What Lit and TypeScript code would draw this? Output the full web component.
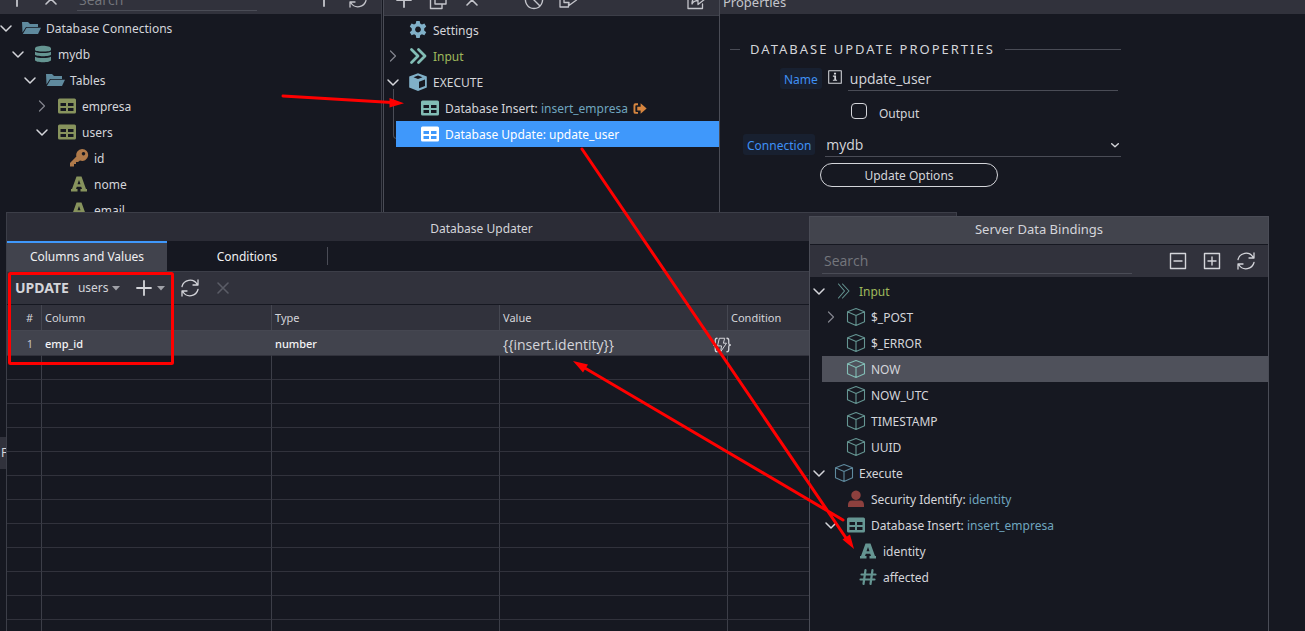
import { LitElement, html, css, svg, nothing } from "lit";
import { customElement, property } from "lit/decorators.js";
import { classMap } from "lit/directives/class-map.js";

const line = (d: string, width = 1.5) => svg`<path d=${d} fill="none" stroke="currentColor" stroke-width=${width} stroke-linecap="round" stroke-linejoin="round"></path>`;
const fill = (d: string) => svg`<path d=${d} fill="currentColor" fill-rule="evenodd"></path>`;

const ICONS: Record<string, unknown> = {
  down: line("M5 8 10 13 15 8"),
  right: line("M7.5 5 12.5 10 7.5 15", 1.2),
  chevron: line("M4.500 8 10 13 15.500 8", 2.4),
  folder: fill("M1 4h6l2 2h8v3H5L1.5 14.500ZM5.500 9.800H20L17 16H1.800Z"),
  database: fill("M2 4.500C2 .8 18 .8 18 4.500V6C18 8 2 8 2 6ZM2 7.800C4 9.500 16 9.500 18 7.800V10.500C18 12.800 2 12.800 2 10.500ZM2 12.800C4 14.500 16 14.500 18 12.800V16C18 19 2 19 2 16Z"),
  table: fill("M2.500 2.500h15A1.500 1.500 0 0 1 19 4v12a1.500 1.500 0 0 1-1.500 1.500h-15A1.500 1.500 0 0 1 1 16V4A1.500 1.500 0 0 1 2.500 2.500ZM3.500 7v3h5.500v-3ZM11 7v3h5.500v-3ZM3.500 12v3h5.500v-3ZM11 12v3h5.500v-3Z"),
  key: fill("M13 1a6 6 0 1 1-2 11.600L9 14H7v2H5v2.500H1V15l6.400-6.400A6 6 0 0 1 13 1ZM14.500 4a1.700 1.700 0 1 0 .01 0Z"),
  letter: fill("M7.500 2.500h5L17 15h1v2.500h-6.500V15H13l-.8-2.300H7.800L7 15h1.500v2.500H2V15h1L7.500 2.500ZM10 6 8.500 10.300h3Z"),
  hash: line("M7.500 3 5.500 17M14.500 3l-2 14M3.500 7.500h14M2.500 12.500h14", 2.2),
  gear: fill("M8.300 1h3.400l.5 2.600 1.700.9 2.500-.9 1.800 3-2 1.800v2l2 1.800-1.800 3-2.500-.9-1.700.9-.5 2.800H8.300l-.5-2.800-1.700-.9-2.500.9-1.800-3 2-1.800v-2l-2-1.800 1.800-3 2.500.9 1.700-.9ZM10 6.600a2.900 2.900 0 1 0 .01 0Z"),
  input: line("M3.500 3.500 10 10l-6.500 6.500M10.500 3.500 17 10l-6.500 6.500", 2.800),
  inputThin: svg`${line("M4.500 3 10.500 10l-6 7M8.500 3l6.500 7-6.500 7", 1.100)}`,
  box: fill("M10 1.200 18.800 4.400V15.600L10 19 1.200 15.600V4.400ZM10 3.500 5.500 5.200 10 7 14.500 5.200ZM11 9.800V16.300L17 14V7.500Z"),
  boxThin: line("M10 1.500 18.500 4.800V14.800L10 18.500 1.500 14.800V4.800ZM1.500 4.800 10 8.500 18.500 4.800M10 8.500v10", 1.1),
  user: fill("M10 1.500a4.700 4.700 0 1 1-.01 0ZM6 11.500h8c3 0 4 2 4 4.500v2H2v-2c0-2.500 1-4.500 4-4.500Z"),
  exit: fill("M8 3H4.500Q2 3 2 5.500v9Q2 17 4.500 17H8v-2.500H5.500Q4.500 14.500 4.500 13.500v-7Q4.500 5.500 5.500 5.500H8ZM11.500 3 19.500 10l-8 7v-4.500H7v-5h4.500Z"),
  plus: line("M10 3v14M3 10h14", 1.8),
  cross: line("M5 5 15 15M15 5 5 15", 1.6),
  refresh: line("M2 8.500A8.300 8.300 0 0 1 17 6M18 2v5h-5M18 11.500A8.300 8.300 0 0 1 3 14M2 18v-5h5", 1.3),
  collapse: line("M2.500 2.500h15v15h-15ZM6 10h8", 1.4),
  expand: line("M2.500 2.500h15v15h-15ZM6 10h8M10 6v8", 1.4),
  copy: line("M7 2h11v12H7ZM7 5H2.500v13.500H14V14", 1.4),
  ban: line("M10 1.500a8.500 8.500 0 1 1-.01 0ZM4 4l12 12", 1.4),
  send: line("M5 5H2v12h8.500v-3M6 9h5V5l7.500 5-7.500 5.500V12.500H6Z", 1.3),
  share: line("M8 3H2v15.500h14.500V14M6 14c0-5 2-7 6-7V3l7 6-7 5.500v-4c-3 0-5 1-6 3.500Z", 1.3),
  bolt: svg`${line("M4.500 2.500Q2.500 2.500 2.500 5v3q0 2-2 2 2 0 2 2v3q0 2.500 2 2.500M15.500 2.500q2 0 2 2.500v3q0 2 2 2-2 0-2 2v3q0 2.500-2 2.500", 1.4)}${line("M7.500 2.500h5.500L11.500 8H15L8.500 17.500 9.500 11H5.500Z", 1.1)}`,
  caret: fill("M2 6h16L10 15Z"),
  info: svg`${line("M1 1h18v18H1Z", 1.5)}${fill("M8.500 4h3v2.500h-3ZM7 8h4.500v6H13v1.500H7V14h2V9.500H7Z")}`,
};

@customElement("ui-icon")
class UiIcon extends LitElement {
  @property() name = "";
  static styles = css`
    :host { display: inline-block; flex: none; width: 20px; height: 20px; }
    svg { display: block; width: 100%; height: 100%; }
  `;
  render() {
    return html`<svg viewBox="0 0 20 20" aria-hidden="true">${ICONS[this.name]}</svg>`;
  }
}

interface Node {
  level: number;
  icon: string;
  tone: string;
  label: string;
  value?: string;
  state?: "open" | "closed";
  selected?: "blue" | "grey";
  output?: boolean;
  green?: boolean;
  guide?: boolean;
}

@customElement("tree-view")
class TreeView extends LitElement {
  @property({ attribute: false }) nodes: Node[] = [];
  static styles = css`
    :host { display: block; }
    ul { list-style: none; margin: 0; padding: 0; }
    .row { display: flex; align-items: center; height: 26px; box-sizing: border-box; padding-left: var(--tree-inset, 3px); position: relative; white-space: nowrap; }
    .level-1 { margin-left: 12px; }
    .level-2 { margin-left: 24px; }
    .level-3 { margin-left: 36px; }
    .level-4 { margin-left: 48px; }
    .toggle { width: 12px; height: 26px; padding: 0; border: 0; background: none; display: flex; align-items: center; justify-content: center; color: #d4d5da; margin-right: 9px; flex: none; }
    .toggle.closed { color: #83858e; }
    .toggle ui-icon { width: 20px; height: 20px; }
    .icon { margin-right: 5px; }
    .label { line-height: 18px; padding-top: 2px; }
    .green { color: #9fb85c; }
    .value { color: #6fa5bf; }
    .blue { background: #3f98fb; color: #fff; }
    .grey { background: #4f515b; }
    .blue .value { color: #fff; }
    .exit { width: 15px; height: 15px; color: #d6853f; margin-left: 4px; }
    .t-folder { color: #5f8a9e; }
    .t-teal { color: #659592; }
    .t-mint { color: #82bdb5; }
    .t-olive { color: #87935d; }
    .t-orange { color: #b07a4a; }
    .t-sky { color: #80b0c8; }
    .t-red { color: #8d403e; }
    .t-white { color: #fff; }
    .guide { position: absolute; left: -3px; top: -32px; width: 5px; height: 50px; box-sizing: border-box; border: 1px solid #4a4c56; border-width: 0 0 1px 1px; border-bottom-left-radius: 4px; z-index: -1; }
  `;
  render() {
    return html`<ul role="tree">
      ${this.nodes.map(n => html`
        <li role="treeitem" class="row level-${n.level} ${n.selected ?? ""}">
          ${n.guide ? html`<span class="guide"></span>` : nothing}
          ${n.state
            ? html`<button class=${classMap({ toggle: true, closed: n.state === "closed" })} aria-label="Toggle"><ui-icon name=${n.state === "open" ? "down" : "right"}></ui-icon></button>`
            : html`<span class="toggle"></span>`}
          <ui-icon class="icon t-${n.tone}" name=${n.icon}></ui-icon>
          <span class=${classMap({ label: true, green: !!n.green })}>${n.label}${n.value ? html` <span class="value">${n.value}</span>` : nothing}</span>
          ${n.output ? html`<ui-icon class="exit" name="exit"></ui-icon>` : nothing}
        </li>`)}
    </ul>`;
  }
}

const CONNECTIONS: Node[] = [
  { level: 0, icon: "folder", tone: "folder", label: "Database Connections", state: "open" },
  { level: 1, icon: "database", tone: "teal", label: "mydb", state: "open" },
  { level: 2, icon: "folder", tone: "folder", label: "Tables", state: "open" },
  { level: 3, icon: "table", tone: "olive", label: "empresa", state: "closed" },
  { level: 3, icon: "table", tone: "olive", label: "users", state: "open" },
  { level: 4, icon: "key", tone: "orange", label: "id" },
  { level: 4, icon: "letter", tone: "olive", label: "nome" },
  { level: 4, icon: "letter", tone: "olive", label: "email" },
];

const STEPS: Node[] = [
  { level: 0, icon: "gear", tone: "sky", label: "Settings" },
  { level: 0, icon: "input", tone: "mint", label: "Input", state: "closed", green: true },
  { level: 0, icon: "box", tone: "sky", label: "EXECUTE", state: "open" },
  { level: 1, icon: "table", tone: "mint", label: "Database Insert:", value: "insert_empresa", output: true },
  { level: 1, icon: "table", tone: "white", label: "Database Update:", value: "update_user", selected: "blue", guide: true },
];

const BINDINGS: Node[] = [
  { level: 0, icon: "inputThin", tone: "teal", label: "Input", state: "open", green: true },
  { level: 1, icon: "boxThin", tone: "teal", label: "$_POST", state: "closed" },
  { level: 1, icon: "boxThin", tone: "teal", label: "$_ERROR" },
  { level: 1, icon: "boxThin", tone: "mint", label: "NOW", selected: "grey" },
  { level: 1, icon: "boxThin", tone: "teal", label: "NOW_UTC" },
  { level: 1, icon: "boxThin", tone: "teal", label: "TIMESTAMP" },
  { level: 1, icon: "boxThin", tone: "teal", label: "UUID" },
  { level: 0, icon: "boxThin", tone: "folder", label: "Execute", state: "open" },
  { level: 1, icon: "user", tone: "red", label: "Security Identify:", value: "identity" },
  { level: 1, icon: "table", tone: "teal", label: "Database Insert:", value: "insert_empresa", state: "open" },
  { level: 2, icon: "letter", tone: "teal", label: "identity" },
  { level: 2, icon: "hash", tone: "teal", label: "affected" },
];

@customElement("app-root")
class AppRoot extends LitElement {
  static styles = css`
    :host { display: block; height: 100vh; position: relative; isolation: isolate; overflow: hidden; background: #161821; color: #d4d5da; font: 12px/18px "Noto Sans", "Open Sans", sans-serif; }
    button, input, select { font: inherit; color: inherit; background: none; border: 0; padding: 0; margin: 0; outline: 0; }
    .panes { display: grid; grid-template-columns: 381px 339px 1fr; height: 100%; }
    .pane { min-width: 0; overflow: hidden; }
    .connections { --tree-inset: 0px; border-right: 1px solid #3c3e48; box-sizing: border-box; width: 382px; }
    .steps { margin-left: 2px; border: solid #4a4c56; border-width: 0 1px; position: relative; z-index: 0; }
    .bar { height: 14px; background: #31323c; display: flex; align-items: flex-end; overflow: hidden; margin-bottom: 1px; color: #c4c5cb; }
    .steps .bar { height: 15px; border-bottom: 1px solid #3c3e48; }
    .bar button { display: flex; }
    .connections .bar { gap: 14px; padding: 0 13px 0 7px; }
    .connections .bar .search { margin: 0 auto 3px 2px; width: 180px; height: 22px; border-bottom: 1px solid #4a4c56; box-sizing: border-box; line-height: 20px; padding: 0 2px; }
    .search, .text, .pick select { font-family: "Open Sans", sans-serif; font-size: 14px; }
    .search::placeholder { color: #74767c; opacity: 1; }
    .properties .bar { padding-left: 3px; }
    .bar h2 { font-size: 13px; font-weight: 400; margin: 0 0 3px; }
    .low { padding-bottom: 5px; }
    .steps .bar { padding: 0 13px 0 10px; }
    .steps .bar button { margin-right: 14px; }
    .steps .bar .ban { margin-left: 28px; }
    .steps .bar .share { margin: 0 0 0 auto; }
    form { max-width: 391px; padding: 23px 0 0 10px; }
    fieldset { border: 0; margin: 0; padding: 0; min-width: 0; }
    .heading { display: grid; grid-template-columns: 10px auto 1fr; gap: 10px; align-items: center; font-size: 13px; line-height: 22px; letter-spacing: 2px; white-space: nowrap; }
    .heading::before, .heading::after { content: ""; height: 1px; background: #4a4c56; }
    .field { display: flex; align-items: center; }
    .name { padding: 6px 3px 0 50px; }
    .tag { background: #182030; color: #3f90f5; border-radius: 3px; padding: 2px 4px 0; line-height: 19px; flex: none; }
    .info { width: 14px; height: 14px; margin: 0 6px 3px; }
    .text { flex: 1; min-width: 0; height: 24px; border-bottom: 1px solid #4a4c56; padding-left: 2px; }
    .output { padding: 12px 0 0 121px; gap: 12px; }
    .output label { padding-top: 2px; }
    .output input { appearance: none; width: 16px; height: 16px; border: 1px solid #d4d5da; border-radius: 4px; margin-bottom: 4px; }
    .connection { padding: 9px 0 0 13px; gap: 10px; }
    .pick { flex: 1; display: flex; position: relative; }
    .pick select { appearance: none; width: 100%; height: 25px; border-bottom: 1px solid #4a4c56; padding: 1px 0 0 1px; }
    .pick ui-icon { position: absolute; right: 0; top: 7px; width: 12px; height: 12px; }
    .options { margin: 6px 0 0 90px; padding-top: 1px; width: 178px; height: 24px; border: 1px solid #d4d5da; border-radius: 12px; display: block; }

    .drawer { position: absolute; left: 0; top: 437px; width: 40px; height: 32px; background: #31323c; text-align: left; padding-left: 1px; }
    .window { position: absolute; box-sizing: border-box; bottom: 0; display: flex; flex-direction: column; background: #161821; border: 1px solid #3c3e48; border-bottom: 0; }
    .window h2 { margin: 0; font: inherit; text-align: center; flex: none; }
    .updater { left: 6px; top: 212px; width: 951px; overflow: hidden; }
    .updater h2 { background: #2b2c36; height: 28px; line-height: 32px; }
    .tabs { display: flex; align-items: center; height: 30px; border-bottom: 1px solid #3c3e48; flex: none; }
    .tab { width: 160px; height: 30px; border-top: 2px solid transparent; color: #f0f0f2; }
    .tab.active { background: #41434d; border-top-color: #3f98fb; }
    .sep { width: 1px; height: 18px; background: #4a4c56; }
    .tools { display: flex; align-items: center; height: 32px; background: #31323c; border-bottom: 1px solid #161821; padding-left: 8px; flex: none; }
    .tools strong { font-size: 14px; margin-right: 9px; }
    .caret { width: 10px; height: 10px; color: #a0a1a8; }
    .users, .add { display: flex; align-items: center; gap: 2px; }
    .add { margin: 0 14px 0 13px; }
    .tools .remove { margin-left: 13px; color: #5a5c66; display: flex; }
    table { border-collapse: separate; border-spacing: 0; table-layout: fixed; width: 100%; font-size: 11px; flex: none; }
    th, td { box-sizing: border-box; height: 24px; padding: 0 3px; text-align: left; font-weight: 400; border: solid #31323c; border-width: 0 1px 1px 0; border-right-color: #3c3e48; }
    th { height: 26px; background: #31323c; border-bottom-color: #454751; border-right-color: #454751; }
    .c1 { width: 35px; } .c2 { width: 230px; } .c3, .c4 { width: 228px; }
    th:first-child, td:first-child { text-align: right; padding-right: 8px; }
    .filled td { height: 25px; background: #41434d; border-right-color: #41434d; color: #f4f4f5; font-weight: 500; padding-top: 1px; }
    .filled td:first-child { color: #c4c5cb; font-weight: 400; }
    .filled .value { font-family: "Open Sans", sans-serif; font-size: 14px; font-weight: 400; line-height: 20px; color: #d4d5da; }
    .cell { display: flex; align-items: center; justify-content: space-between; margin-right: -7px; position: relative; padding-top: 3px; }
    .cell ui-icon { width: 18px; height: 18px; }

    .bindings { left: 809px; top: 216px; width: 460px; border-color: #4a4c56; }
    .bindings h2 { background: #42444d; font-size: 13px; height: 27px; line-height: 24px; border-bottom: 1px solid #161821; }
    .finder { display: flex; align-items: center; height: 32px; background: #31323c; padding: 0 12px 0 12px; gap: 14px; margin-bottom: 1px; flex: none; }
    .finder .search { flex: 1; min-width: 0; height: 26px; border-bottom: 1px solid #4a4c56; margin-right: 22px; padding-left: 2px; box-sizing: border-box; }
    .finder button { display: flex; }
    .marks { position: absolute; left: 0; top: 0; width: 1305px; height: 631px; pointer-events: none; }
  `;

  render() {
    return html`
      <div class="panes">
        <section class="pane connections">
          <div class="bar">
            <button class="low" aria-label="Add"><ui-icon name="plus"></ui-icon></button>
            <button class="low" aria-label="Remove"><ui-icon name="cross"></ui-icon></button>
            <input class="search" placeholder="Search" aria-label="Search connections">
            <button class="low" aria-label="Add connection"><ui-icon name="plus"></ui-icon></button>
            <button class="low" aria-label="Refresh"><ui-icon name="refresh"></ui-icon></button>
          </div>
          <tree-view .nodes=${CONNECTIONS}></tree-view>
        </section>
        <section class="pane steps">
          <div class="bar">
            <button class="low" aria-label="Add step"><ui-icon name="plus"></ui-icon></button>
            <button class="low" aria-label="Copy"><ui-icon name="copy"></ui-icon></button>
            <button class="low" aria-label="Delete"><ui-icon name="cross"></ui-icon></button>
            <button class="low ban" aria-label="Disable"><ui-icon name="ban"></ui-icon></button>
            <button class="low" aria-label="Send"><ui-icon name="send"></ui-icon></button>
            <button class="low share" aria-label="Open"><ui-icon name="share"></ui-icon></button>
          </div>
          <tree-view .nodes=${STEPS}></tree-view>
        </section>
        <section class="pane properties">
          <div class="bar"><h2>Properties</h2></div>
          <form>
            <fieldset>
              <div class="heading">DATABASE UPDATE PROPERTIES</div>
              <div class="field name">
                <label class="tag" for="name">Name</label>
                <ui-icon class="info" name="info"></ui-icon>
                <input class="text" id="name" value="update_user">
              </div>
              <div class="field output">
                <input type="checkbox" id="output"><label for="output">Output</label>
              </div>
              <div class="field connection">
                <label class="tag" for="connection">Connection</label>
                <div class="pick">
                  <select id="connection"><option>mydb</option></select>
                  <ui-icon name="chevron"></ui-icon>
                </div>
              </div>
              <button type="button" class="options">Update Options</button>
            </fieldset>
          </form>
        </section>
      </div>

      <button class="drawer">F</button>

      <section class="window updater">
        <h2>Database Updater</h2>
        <div class="tabs" role="tablist">
          <button class="tab active" role="tab">Columns and Values</button>
          <button class="tab" role="tab">Conditions</button>
          <span class="sep"></span>
        </div>
        <div class="tools">
          <strong>UPDATE</strong>
          <button class="users">users <ui-icon class="caret" name="caret"></ui-icon></button>
          <button class="add" aria-label="Add column"><ui-icon name="plus"></ui-icon><ui-icon class="caret" name="caret"></ui-icon></button>
          <button class="users" aria-label="Refresh columns"><ui-icon name="refresh"></ui-icon></button>
          <button class="remove" aria-label="Remove column"><ui-icon name="cross"></ui-icon></button>
        </div>
        <table>
          <thead>
            <tr><th class="c1">#</th><th class="c2">Column</th><th class="c3">Type</th><th class="c4">Value</th><th>Condition</th></tr>
          </thead>
          <tbody>
            <tr class="filled">
              <td>1</td><td>emp_id</td><td>number</td>
              <td class="value"><div class="cell">{{insert.identity}}<ui-icon name="bolt"></ui-icon></div></td>
              <td></td>
            </tr>
            ${Array.from({ length: 12 }, () => html`<tr><td></td><td></td><td></td><td></td><td></td></tr>`)}
          </tbody>
        </table>
      </section>

      <section class="window bindings">
        <h2>Server Data Bindings</h2>
        <div class="finder">
          <input class="search" placeholder="Search" aria-label="Search bindings">
          <button aria-label="Collapse all"><ui-icon name="collapse"></ui-icon></button>
          <button aria-label="Expand all"><ui-icon name="expand"></ui-icon></button>
          <button aria-label="Refresh bindings"><ui-icon name="refresh"></ui-icon></button>
        </div>
        <tree-view .nodes=${BINDINGS}></tree-view>
      </section>

      <svg class="marks" viewBox="0 0 1305 631" aria-hidden="true">
        <g fill="none" stroke="#f00" stroke-width="3" stroke-linecap="round">
          <rect x="9.500" y="273.500" width="163" height="90" rx="1"></rect>
          <path d="M283 96 392 102.500M582 149 846 538M843 520 584 367.500"></path>
        </g>
        <path fill="#f00" d="M404 103.300 389.500 98 389.500 107.500ZM854 549 850 534.500 842.500 539.500ZM573 361 583 372.500 588 364.500Z"></path>
      </svg>
    `;
  }
}
